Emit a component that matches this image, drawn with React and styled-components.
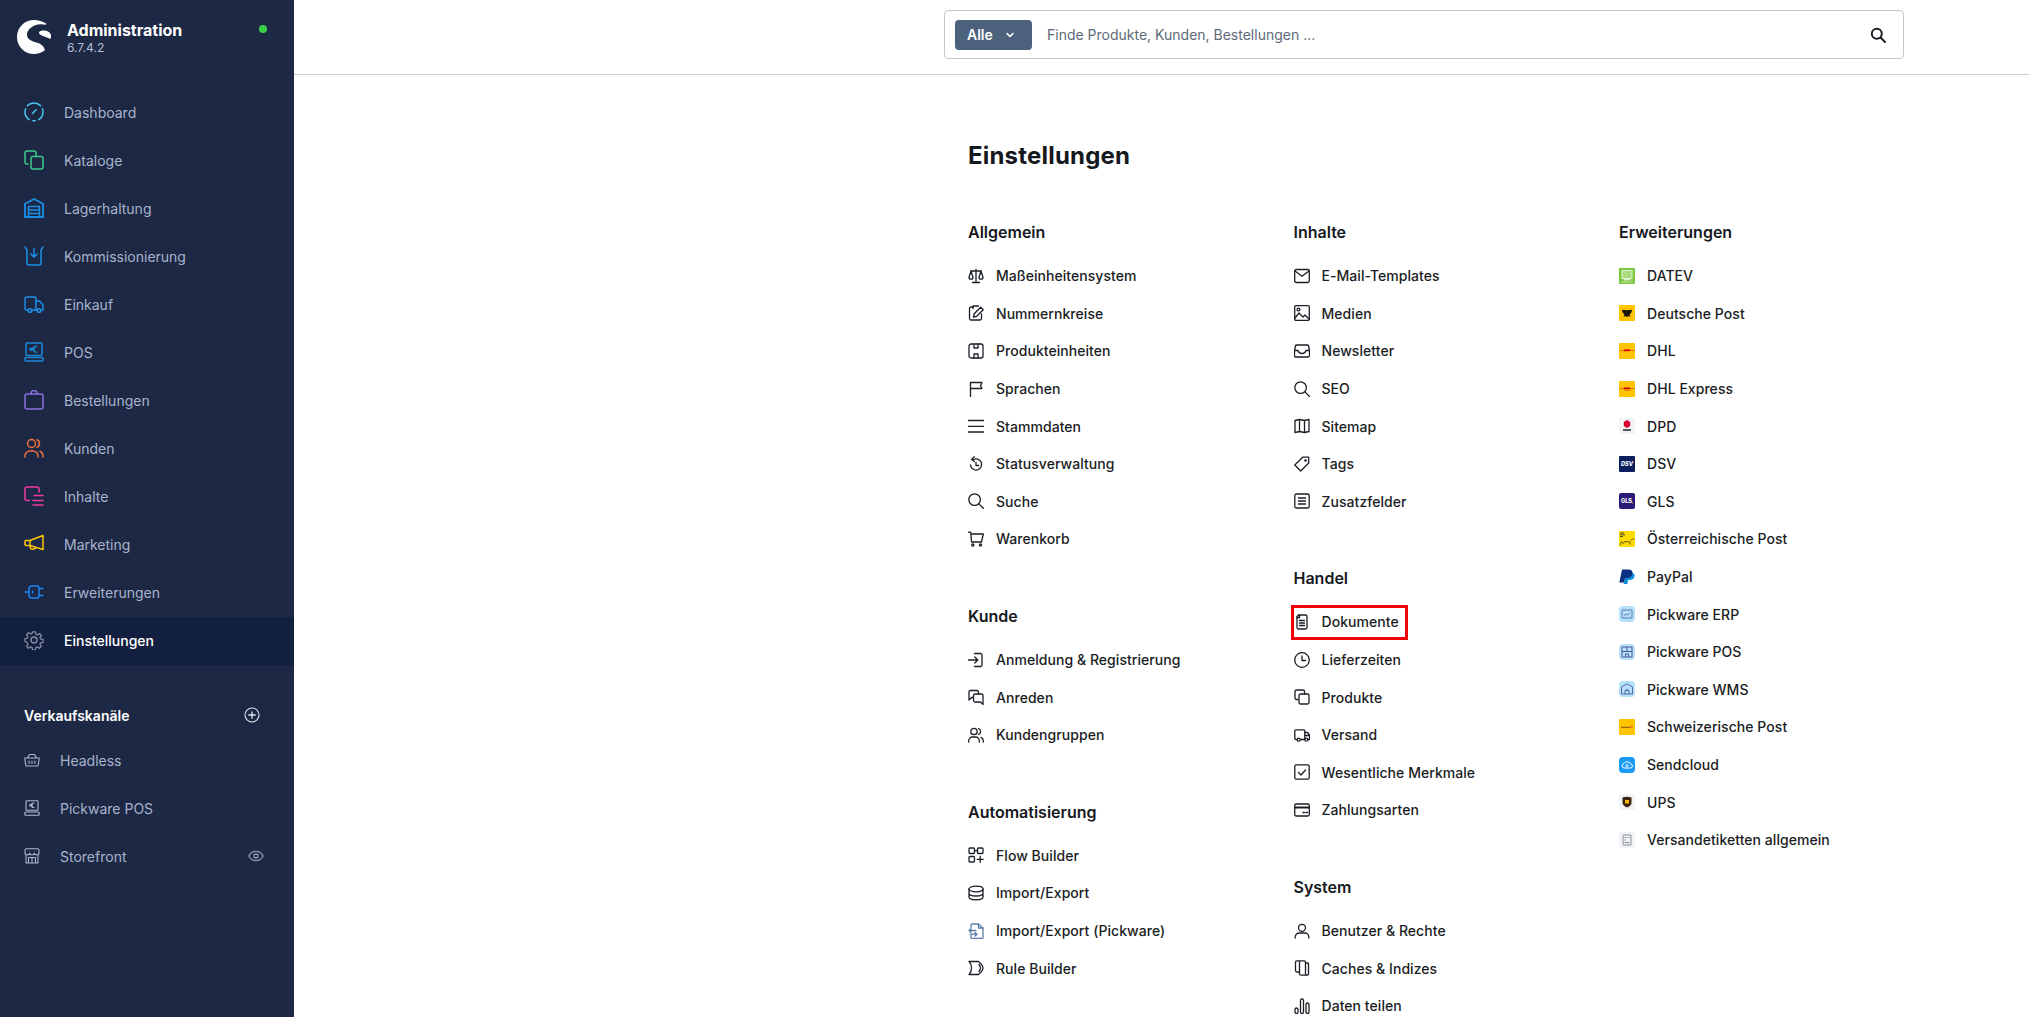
import React from "react";
import styled, { createGlobalStyle } from "styled-components";

const Global = createGlobalStyle`
  html, body { margin: 0; padding: 0; height: 100%; background: #fff; }
  body { font-family: Inter, "Noto Sans", "Liberation Sans", sans-serif; -webkit-font-smoothing: antialiased; }
  * { box-sizing: border-box; }
`;

const Page = styled.div`
  display: flex;
  width: 100%;
  height: 100vh;
  overflow: hidden;
`;

const Sidebar = styled.aside`
  flex: 0 0 294px;
  display: flex;
  flex-direction: column;
  background: #1d2845;
`;

const Brand = styled.div`
  display: flex;
  height: 89px;
  padding: 20px 27px 0 17px;
  gap: 16px;
`;

const BrandText = styled.div`
  display: flex;
  flex-direction: column;
`;

const BrandName = styled.span`
  font-size: 16px;
  line-height: 20px;
  font-weight: 700;
  color: #fff;
`;

const BrandVersion = styled.span`
  font-size: 12px;
  line-height: 16px;
  color: #b4bed2;
`;

const StatusDot = styled.span`
  width: 8px;
  height: 8px;
  margin: 5px 0 0 auto;
  border-radius: 50%;
  background: #37d046;
`;

const NavRow = styled.div`
  display: flex;
  align-items: center;
  height: 48px;
  padding: 0 0 2px 24px;
  gap: 20px;
  font-size: 14px;
  color: ${(p) => (p.$active ? "#fff" : "#a8b4cc")};
  background: ${(p) => (p.$active ? "#131f3f" : "transparent")};
  font-weight: ${(p) => (p.$active ? 500 : 400)};
`;

const NavSvg = styled.svg.attrs({ viewBox: "0 0 20 20", fill: "none" })`
  width: 20px;
  height: 20px;
  flex: none;
  stroke: ${(p) => p.$color};
  stroke-width: 1.5;
  stroke-linecap: round;
  stroke-linejoin: round;
`;

const SalesHeader = styled.div`
  display: flex;
  align-items: center;
  justify-content: space-between;
  height: 20px;
  margin-top: 40px;
  margin-bottom: 12px;
  padding: 0 34px 0 24px;
  font-size: 14px;
  font-weight: 600;
  color: #fff;
`;

const ChannelRow = styled.div`
  display: flex;
  align-items: center;
  height: 48px;
  padding: 0 30px 2px 24px;
  gap: 20px;
  font-size: 14px;
  color: #a8b4cc;
`;

const ChannelSvg = styled.svg.attrs({ viewBox: "0 0 16 16", fill: "none" })`
  width: 16px;
  height: 16px;
  flex: none;
  stroke: ${(p) => p.$color || "#aeb8cc"};
  stroke-width: 1.1;
  stroke-linecap: round;
  stroke-linejoin: round;
  margin-left: ${(p) => (p.$end ? "auto" : "0")};
`;

const Main = styled.main`
  flex: 1;
  min-width: 0;
  display: flex;
  flex-direction: column;
`;

const TopBar = styled.header`
  flex: none;
  height: 75px;
  padding: 10px 0 0 650px;
  border-bottom: 1px solid #c9cbd6;
`;

const SearchBox = styled.div`
  display: flex;
  align-items: center;
  width: 960px;
  height: 49px;
  padding: 0 17px 0 10px;
  border: 1px solid #c3c5d1;
  border-radius: 4px;
`;

const ScopeButton = styled.div`
  display: flex;
  align-items: center;
  gap: 9px;
  width: 77px;
  height: 30px;
  padding-left: 12px;
  border-radius: 4px;
  background: #4c627c;
  color: #fff;
  font-size: 14px;
  font-weight: 600;
`;

const Placeholder = styled.span`
  flex: 1;
  margin-left: 15px;
  font-size: 14px;
  color: #5e6a78;
`;

const Content = styled.div`
  flex: 1;
  padding: 65px 0 0 674px;
`;

const Title = styled.h1`
  margin: 0 0 48px;
  font-size: 24px;
  line-height: 32px;
  font-weight: 700;
  letter-spacing: 0.2px;
  color: #15181d;
`;

const Columns = styled.div`
  display: grid;
  grid-template-columns: repeat(3, 325.5px);
  width: 976.5px;
`;

const Column = styled.div`
  display: flex;
  flex-direction: column;
  gap: 46px;
`;

const Heading = styled.h2`
  margin: 0 0 13px;
  font-size: 16px;
  line-height: 24px;
  font-weight: 600;
  color: #15181d;
`;

const Item = styled.div`
  display: flex;
  align-items: center;
  height: 37.6px;
  gap: 12px;
  font-size: 14px;
  font-weight: 450;
  letter-spacing: 0.05px;
  color: #1a1d23;
  width: fit-content;
  position: relative;
  ${(p) =>
    p.$marked &&
    `&::after {
      content: "";
      position: absolute;
      inset: 2px -9px 0.5px -3px;
      border: 3px solid #f40009;
    }`}
`;

const ItemSvg = styled.svg.attrs({ viewBox: "0 0 16 16", fill: "none" })`
  width: 16px;
  height: 16px;
  flex: none;
  stroke: ${(p) => p.$color || "#1a1f26"};
  stroke-width: 1.3;
  stroke-linecap: round;
  stroke-linejoin: round;
`;

const BrandSvg = styled.svg.attrs({ viewBox: "0 0 16 16" })`
  width: 16px;
  height: 16px;
  flex: none;
  border-radius: ${(p) => p.$radius || 1}px;
  background: ${(p) => p.$bg || "transparent"};
`;

const nav = [
  ["Dashboard", "#47c2e8", <><path d="M5.2 17.6A9 9 0 0 1 1 10c0-1.2.2-2.3.6-3.3M3.4 3.8A9 9 0 0 1 16.6 3.8M18.4 6.7c.4 1 .6 2.1.6 3.3a9 9 0 0 1-4.2 7.6" /><path d="M8.8 18.8h2.4" /><path d="M8.5 11.5 12 7.8" /></>],
  ["Kataloge", "#3ecb8a", <><path d="M4 14H3a2 2 0 0 1-2-2V3a2 2 0 0 1 2-2h7a2 2 0 0 1 2 2v3" /><rect x="7" y="6.5" width="12" height="12.5" rx="2" /></>],
  ["Lagerhaltung", "#1b8fe6", <><path d="M1 19V5.8L10 1l9 4.8V19z" strokeWidth="1.8" /><path d="M4.5 19V8.5h11V19M4.5 12h11M4.5 15.5h11" /></>],
  ["Kommissionierung", "#1b8fe6", <><path d="M1 1l2 3v13a2 2 0 0 0 2 2h10a2 2 0 0 0 2-2V4l2-3" /><path d="M10 2.5V11M6.8 8l3.2 3 3.2-3" /></>],
  ["Einkauf", "#1b8fe6", <><path d="M4 16H2.5A1.5 1.5 0 0 1 1 14.5v-10A1.5 1.5 0 0 1 2.5 3h8A1.5 1.5 0 0 1 12 4.5V16H8" /><path d="M12 7h3.5l3.5 4v5h-2.5M12 16h1" /><circle cx="6" cy="16.5" r="1.8" /><circle cx="15" cy="16.5" r="1.8" /></>],
  ["POS", "#1b86d6", <><rect x="2" y="1" width="16" height="12.5" rx="1" /><rect x="1" y="15.5" width="18" height="3.5" rx="1" /><path d="M12.5 4.2a3 3 0 1 0 0 6M6 6.4h4.5M6 8h4" /></>],
  ["Bestellungen", "#8a6fe0", <><rect x="1" y="4" width="18" height="15" rx="2" /><path d="M7 4V3.5a3 3 0 0 1 6 0V4" /></>],
  ["Kunden", "#ef7140", <><circle cx="7.5" cy="5.5" r="4" /><path d="M1 19v-1a5 5 0 0 1 5-5h3a5 5 0 0 1 5 5v1" /><path d="M13 1.8a4 4 0 0 1 0 7.4M16 13.3a5 5 0 0 1 3 4.7v1" /></>],
  ["Inhalte", "#f03c9c", <><path d="M5.5 14.5H3a2 2 0 0 1-2-2V3a2 2 0 0 1 2-2h10a2 2 0 0 1 2 2v3" /><path d="M10 9.5h9M9 14.5h10M9 19h10" /></>],
  ["Marketing", "#ffc700", <><path d="M19 1.5v14L6 11.5H2a1 1 0 0 1-1-1v-3a1 1 0 0 1 1-1h4z" /><path d="M6 6.5v5M6 11.5 6.5 14a1.5 1.5 0 0 0 1.8 1.2l3-.6" /></>],
  ["Erweiterungen", "#1a86f0", <><path d="M1 10h4M15 6.5h4M15 13.5h4" /><path d="M8 4h5a2 2 0 0 1 2 2v8a2 2 0 0 1-2 2H8a3 3 0 0 1-3-3V7a3 3 0 0 1 3-3z" /><path d="M8.5 9v2" /></>],
  ["Einstellungen", "#7d899e", <><path d="M8.4 1h3.2l.5 2.6 1.7.7 2.2-1.5 2.2 2.2-1.5 2.2.7 1.7 2.6.5v3.2l-2.6.5-.7 1.7 1.5 2.2-2.2 2.2-2.2-1.5-1.7.7-.5 2.5H8.4l-.5-2.5-1.7-.7-2.2 1.5-2.2-2.2 1.5-2.2-.7-1.7L0 11.6V8.4l2.6-.5.7-1.7-1.5-2.2L4 1.8l2.2 1.5 1.7-.7z" transform="translate(1 1) scale(.9)" /><circle cx="10" cy="10" r="3" /></>, true],
];

const ic = {
  scale: <><path d="M8 1.5v12M4.5 14.5h7M2.8 3h10.4" /><path d="M3 3.2 1 9.2a2 2 0 0 0 4 0zM13 3.2l-2 6a2 2 0 0 0 4 0z" /></>,
  pen: <><path d="M5 2H3A1.5 1.5 0 0 0 1.5 3.500v10A1.5 1.5 0 0 0 3 15h9a1.5 1.5 0 0 0 1.5-1.5V9" /><path d="M5 1v2.500M5 1h5.500" /><path d="M5.500 12l.7-3.200L12.700 2.300l2.500 2.500-6.500 6.500z" /></>,
  box: <><rect x="1" y="1" width="14" height="14" rx="2" /><path d="M6 1v4h4V1M6 15v-4h4v4" /></>,
  flag: <path d="M2.500 15.500V1.500h11.500l-1.500 3.200L14 7.500H2.500" />,
  menu: <path d="M.5 2.500h15M.5 8.300h15M.5 14h15" />,
  history: <><path d="M4.800 3.900A5.600 5.600 0 1 1 2.500 9" /><path d="M6.200 .8 3.600 3.400l2.800 2.200" /><path d="M8 6.500v3h2.600" /></>,
  search: <><circle cx="6.600" cy="6.600" r="5.800" /><path d="m10.900 10.900 4.600 4.600" /></>,
  cart: <><path d="M.5 1.200h2.200l.9 9.800h9.900L15.300 3H3" /><circle cx="4.800" cy="14" r="1.100" /><circle cx="12.500" cy="14" r="1.100" /></>,
  login: <><path d="M.5 8H9.500M6.800 5l3 3-3 3" /><path d="M6.500 1.500h6a1.500 1.500 0 0 1 1.500 1.500v10a1.500 1.500 0 0 1-1.500 1.500h-6" /></>,
  chat: <><path d="M10.500 5V3a1.500 1.500 0 0 0-1.500-1.500H2.500A1.500 1.500 0 0 0 1 3v8l2.500-2.500H5" /><path d="M7 5h6.500A1.500 1.500 0 0 1 15 6.500v9l-2.500-2.500H7a1.500 1.500 0 0 1-1.500-1.500v-5A1.500 1.500 0 0 1 7 5z" /></>,
  users: <><circle cx="6" cy="4.500" r="3.200" /><path d="M.7 15v-1.200a3.800 3.800 0 0 1 3.800-3.800h3a3.800 3.800 0 0 1 3.800 3.800V15" /><path d="M10.500 1.500a3.200 3.200 0 0 1 0 6M13 10.300a3.800 3.800 0 0 1 2.300 3.500V15" /></>,
  flow: <><rect x="1" y="1" width="5.500" height="5.500" rx="1" /><rect x="9.500" y="1" width="5.500" height="5.500" rx="1" /><rect x="1" y="9.500" width="5.500" height="5.500" rx="1" /><path d="M6.500 3.700h3M12.200 9.500v6M9.200 12.300h6" /></>,
  db: <><ellipse cx="8" cy="4" rx="7" ry="2.800" /><path d="M1 4v8c0 1.500 3 2.800 7 2.800s7-1.300 7-2.800V4M1 8.200c0 1.500 3 2.800 7 2.800s7-1.300 7-2.800" /></>,
  transfer: <><path d="M3 4.500V2a1 1 0 0 1 1-1h6.500L15 5v9.500a1 1 0 0 1-1 1H4a1 1 0 0 1-1-1V12" /><path d="M10.500 1v4H15" /><path d="M1 7.500h7M3 5.700 1 7.500l2 1.800M2 11.200h7M7 9.400l2 1.800-2 1.800" /></>,
  rule: <><path d="M1 1.500h9.500C12.800 3.500 15 6 15 8s-2.200 4.500-4.500 6.500H1C2.800 12.800 3.500 10.500 3.500 8S2.800 3.200 1 1.500z" /><path d="M11 4.500c1 1.200 1.500 2.300 1.500 3.500s-.5 2.300-1.500 3.500" /></>,
  mail: <><rect x=".7" y="1.500" width="14.600" height="13" rx="1.500" /><path d="m1 3 7 5.200L15 3" /></>,
  image: <><rect x=".7" y=".7" width="14.600" height="14.600" rx="1.200" /><circle cx="4.500" cy="4.500" r="1.400" /><path d="m1 13 4-5 4 4 2-2 4 4" /></>,
  inbox: <><path d="M2.800 2h10.400a1.500 1.500 0 0 1 1.400 1l.9 4.500v5a1.500 1.500 0 0 1-1.500 1.500h-13A1.500 1.500 0 0 1 .5 12.500v-5L1.400 3a1.500 1.500 0 0 1 1.400-1z" /><path d="M.5 7.500H4c.5 2 2 3 4 3s3.500-1 4-3h3.500" /></>,
  map: <path d="M1 2.500 5.500 1.500 10.500 2.500 15 1.500V13.500L10.500 14.500 5.500 13.500 1 14.500zM5.500 1.500V13.500M10.500 2.500V14.500" />,
  tag: <><path d="M.8 9 8.700 1.200h6V7l-8 8z" /><circle cx="11.500" cy="4.500" r=".7" /></>,
  list: <><rect x=".8" y="1" width="14.400" height="14" rx="1.500" /><path d="M4.500 5h7M4.500 8h7M4.500 11h7" /></>,
  doc: <><path d="M4.500 1h7A1.500 1.500 0 0 1 13 2.500v11a1.500 1.500 0 0 1-1.500 1.500h-7A1.500 1.500 0 0 1 3 13.500V2.500z" /><path d="M5.500 1v2.500H3M5.500 6.500h5M5.500 9h5M5.500 11.500h5" /></>,
  clock: <><circle cx="8" cy="8" r="7.300" /><path d="M8 3.800V8.500H11.500" /></>,
  copy: <><path d="M4 10.500H2.500A1.500 1.500 0 0 1 1 9V2.500A1.500 1.500 0 0 1 2.500 1H9a1.500 1.500 0 0 1 1.500 1.500V5" /><rect x="5" y="5" width="10" height="10" rx="1.500" /></>,
  truck: <><path d="M3 12.500H1.800A1 1 0 0 1 .8 11.500V3.800a1 1 0 0 1 1-1h8a1 1 0 0 1 1 1v8.700H6.500" /><path d="M10.800 5.500h2.700l2 2.500v4.500H14M10.800 8.500h4.700" /><circle cx="4.700" cy="12.700" r="1.500" /><circle cx="12.300" cy="12.700" r="1.500" /></>,
  check: <><rect x=".8" y=".8" width="14.400" height="14.400" rx="1.500" /><path d="m4.500 8.500 2.500 2.500 4.500-5" /></>,
  card: <><rect x=".7" y="2" width="14.600" height="12" rx="1.500" /><path d="M.7 5.500h14.600" strokeWidth="1.800" /><path d="M9 10.500h1.500M12 10.500h1.500" /></>,
  user: <><circle cx="8" cy="4.800" r="3.500" /><path d="M1.200 15v-1a4 4 0 0 1 4-4h5.600a4 4 0 0 1 4 4v1" /></>,
  caches: <><path d="M5 .8H3A1.500 1.500 0 0 0 1.500 2.300V10.500A1.500 1.500 0 0 0 3 12h1.500" /><path d="M6 .8h4A1.500 1.500 0 0 1 11.500 2.300V13.700A1.500 1.500 0 0 0 13 15.200H7A1.500 1.500 0 0 1 5.500 13.700V1.300z" /><path d="M11.500 3h2A1 1 0 0 1 14.500 4v9.500A1.500 1.500 0 0 1 13 15.200" /></>,
  bars: <><rect x="1" y="10" width="3" height="5.500" rx="1.500" /><rect x="6.500" y=".8" width="3" height="14.700" rx="1.500" /><rect x="12" y="5" width="3" height="10.500" rx="1.500" /></>,
};

const dhlMarks = (
  <>
    <path d="M.5 7.600h15" stroke="#d40511" strokeWidth=".5" fill="none" />
    <rect x="5" y="6.400" width="6" height="1.800" fill="#d40511" />
  </>
);

const brands = {
  datev: <BrandSvg $bg="#7cc63f"><rect x="3" y="2.500" width="10" height="8" fill="#a9db7e" stroke="#eaf7dd" strokeWidth=".9" /><rect x="4.500" y="11.300" width="7" height="1" fill="#fff" /><rect x="2" y="13.700" width="12" height=".7" fill="#e4f4d5" /></BrandSvg>,
  post: <BrandSvg $bg="#ffc400"><path d="M3 4.500c1.500 1.500 3.500-.5 5 1 1.500-1.500 3.500.5 5-1 0 3-1.500 4-2.500 5l1 2.500-2-1-1.500 1-1.500-1-2 1 1-2.500C4.500 8.500 3 7.500 3 4.500z" fill="#17140a" /></BrandSvg>,
  dhl: <BrandSvg $bg="#ffc400">{dhlMarks}</BrandSvg>,
  dhlx: <BrandSvg $bg="#ffc400">{dhlMarks}<rect x="5" y="9.200" width="6" height=".8" fill="#e8742a" /></BrandSvg>,
  dpd: <BrandSvg $bg="#f2f3f6"><path d="M8 2 11.200 4V8L8 10 4.800 8V4z" fill="#dc0032" /><rect x="4" y="11" width="8" height="2" fill="#5a5a62" /></BrandSvg>,
  dsv: <BrandSvg $bg="#0b1f5e"><text x="8" y="10" fontSize="5.500" fontWeight="800" fontStyle="italic" fontFamily="Inter, sans-serif" textAnchor="middle" fill="#fff">DSV</text></BrandSvg>,
  gls: <BrandSvg $bg="#2b1a78" $radius={2}><text x="7.500" y="10.200" fontSize="5.600" fontWeight="800" fontFamily="Inter, sans-serif" textAnchor="middle" fill="#fff">GLS</text><circle cx="13.500" cy="10" r=".6" fill="#ffd100" /></BrandSvg>,
  at: <BrandSvg $bg="#ffdc00"><path d="M1 2h4M1 3.800h5M1 5.500h3" stroke="#222" strokeWidth=".8" /><path d="M1 14l1.500-3.500 2 2 1-2 5 .5 1 2.500M11 10.500l3-3 1 1" stroke="#222" strokeWidth=".7" fill="none" /></BrandSvg>,
  paypal: <BrandSvg><path d="M5 13.500 7 4h5.500c2.500 0 3.500 1.500 3 3.500-.6 2.600-2.600 3.500-5 3.500H9L8.300 15H4.500z" fill="#0a8ddb" /><path d="M3 .5h6.500c3 0 4.500 1.700 4 4.300C13 7.800 10.500 9 8 9H6L5 13.500H.3z" fill="#0b2f7e" /></BrandSvg>,
  erp: <BrandSvg $bg="#b5e2fa" $radius={4}><g fill="none" stroke="#4a5c9c" strokeWidth=".8"><rect x="3" y="4" width="10" height="8" rx=".7" /><path d="m5 9.500 2-1.500 1.500 1 2.500-2" /></g></BrandSvg>,
  pos: <BrandSvg $bg="#b5e2fa" $radius={4}><g fill="none" stroke="#3e4a8c" strokeWidth=".9"><rect x="3" y="3" width="10" height="10" /><path d="M3 7.500h10M8 3v4.500M6.500 13v-3h3v3" /></g></BrandSvg>,
  wms: <BrandSvg $bg="#b5e2fa" $radius={4}><g fill="none" stroke="#4a5c9c" strokeWidth=".9"><path d="M2.500 13V6L8 2.800 13.500 6v7z" /><path d="M6 13V9.500h4V13M8 7.500v2" /></g></BrandSvg>,
  ch: <BrandSvg $bg="#ffc400"><path d="M2 8.300h9" stroke="#6b4a10" strokeWidth=".9" /><circle cx="12.500" cy="7.800" r="1.300" fill="#e8742a" /></BrandSvg>,
  send: <BrandSvg $bg="#1a9cf5" $radius={4}><path d="M5 11h6.300a2 2 0 0 0 .3-4A3.700 3.700 0 0 0 5 6.500 2.300 2.300 0 0 0 5 11z" fill="none" stroke="#fff" strokeWidth="1" /><circle cx="8" cy="8.700" r="1.100" fill="none" stroke="#fff" strokeWidth=".8" /></BrandSvg>,
  ups: <BrandSvg $bg="#f2f3f6"><path d="M3.500 3.500C6 2.500 10 2.500 12.500 3.500V9c0 2-2.500 3.500-4.500 4.500C6 12.500 3.500 11 3.500 9z" fill="#3a2410" /><path d="M6 6h4v3.500H6z" fill="#f5b800" /></BrandSvg>,
  label: <BrandSvg $bg="#f2f3f6"><g fill="none" stroke="#6b7280" strokeWidth=".8"><rect x="4" y="3" width="8" height="10" rx=".5" /><path d="M5.500 5.500h2M9 5.500h1.500M5.500 8h1.500M5.500 10.500h5" /></g></BrandSvg>,
};

const col1 = [
  ["Allgemein", [["Maßeinheitensystem", "scale"], ["Nummernkreise", "pen"], ["Produkteinheiten", "box"], ["Sprachen", "flag"], ["Stammdaten", "menu"], ["Statusverwaltung", "history"], ["Suche", "search"], ["Warenkorb", "cart"]]],
  ["Kunde", [["Anmeldung & Registrierung", "login"], ["Anreden", "chat"], ["Kundengruppen", "users"]]],
  ["Automatisierung", [["Flow Builder", "flow"], ["Import/Export", "db"], ["Import/Export (Pickware)", "transfer", "#5d7ea6"], ["Rule Builder", "rule"]]],
];

const col2 = [
  ["Inhalte", [["E-Mail-Templates", "mail"], ["Medien", "image"], ["Newsletter", "inbox"], ["SEO", "search"], ["Sitemap", "map"], ["Tags", "tag"], ["Zusatzfelder", "list"]]],
  ["Handel", [["Dokumente", "doc", null, true], ["Lieferzeiten", "clock"], ["Produkte", "copy"], ["Versand", "truck"], ["Wesentliche Merkmale", "check"], ["Zahlungsarten", "card"]]],
  ["System", [["Benutzer & Rechte", "user"], ["Caches & Indizes", "caches"], ["Daten teilen", "bars"]]],
];

const col3 = [
  ["Erweiterungen", [
    ["DATEV", "datev"], ["Deutsche Post", "post"], ["DHL", "dhl"], ["DHL Express", "dhlx"], ["DPD", "dpd"], ["DSV", "dsv"], ["GLS", "gls"],
    ["Österreichische Post", "at"], ["PayPal", "paypal"], ["Pickware ERP", "erp"], ["Pickware POS", "pos"], ["Pickware WMS", "wms"],
    ["Schweizerische Post", "ch"], ["Sendcloud", "send"], ["UPS", "ups"], ["Versandetiketten allgemein", "label"],
  ]],
];

function Section({ title, items }) {
  return (
    <section>
      <Heading>{title}</Heading>
      {items.map(([label, icon, color, marked]) => (
        <Item key={label} $marked={marked}>
          {brands[icon] || <ItemSvg $color={color}>{ic[icon]}</ItemSvg>}
          {label}
        </Item>
      ))}
    </section>
  );
}

const LogoSvg = styled.svg.attrs({ viewBox: "0 0 34 34" })`
  width: 34px;
  height: 34px;
  flex: none;
  fill: #fff;
`;

const Logo = () => (
  <LogoSvg>
    <path d="M27.500 30.500C24.500 32.800 21 34 17 34 7.500 34 0 26.500 0 17S7.500 0 17 0c4.500 0 8.500 1.300 12 3.500.5.500.3 1.300-.5 1.200C25 3.800 21 4 17.500 5.500 12.500 7.800 9.800 11.500 10 15c.2 4 4 6 9.500 7.500 4 1.200 7.500 3.500 8.300 7.200.1.300 0 .6-.3.800z" />
    <path d="M34 15.500c.1 1.500-.2 2.800-.7 3.500-3.500-2-7.500-2.800-10.300-4.500-1.500-1-1.200-2.800.8-3.500 4-1.300 9.800.5 10.200 4.500z" />
  </LogoSvg>
);

export default function App() {
  return (
    <Page>
      <Global />
      <Sidebar>
        <Brand>
          <Logo />
          <BrandText>
            <BrandName>Administration</BrandName>
            <BrandVersion>6.7.4.2</BrandVersion>
          </BrandText>
          <StatusDot />
        </Brand>
        {nav.map(([label, color, paths, active]) => (
          <NavRow key={label} $active={active}>
            <NavSvg $color={color}>{paths}</NavSvg>
            {label}
          </NavRow>
        ))}
        <SalesHeader>
          Verkaufskanäle
          <ChannelSvg $color="#dfe4ee">
            <circle cx="8" cy="8" r="7" />
            <path d="M8 4.800v6.400M4.800 8h6.400" strokeWidth="1.300" />
          </ChannelSvg>
        </SalesHeader>
        <ChannelRow>
          <ChannelSvg>
            <path d="M.8 6h14.400l-.8 6.500a1.500 1.500 0 0 1-1.500 1.500H3.100a1.500 1.500 0 0 1-1.500-1.500zM3.500 6l2-3.500h5l2 3.500M5 9v2.500M8 9v2.500M11 9v2.500" />
          </ChannelSvg>
          Headless
        </ChannelRow>
        <ChannelRow>
          <ChannelSvg>
            <rect x="2" y=".8" width="12" height="9.500" rx=".8" />
            <rect x=".8" y="12" width="14.400" height="3.200" rx="1" />
            <path d="M10 3a2.300 2.300 0 1 0 0 4.500M5.500 4.700h3M5.500 6h3" />
          </ChannelSvg>
          Pickware POS
        </ChannelRow>
        <ChannelRow>
          <ChannelSvg>
            <path d="M2.500.8h11A1.500 1.500 0 0 1 15 2.300V5c0 1-1 1.800-2.300 1.800S10.300 6 10.300 5c0 1-1 1.800-2.300 1.800S5.700 6 5.700 5c0 1-1 1.800-2.400 1.800S1 6 1 5V2.300A1.500 1.500 0 0 1 2.500.8z" />
            <path d="M2 7v8h12V7M4.500 15V9.500h7V15M8 9.500V15" />
          </ChannelSvg>
          Storefront
          <ChannelSvg $end $color="#8f9bb3">
            <path d="M.8 8C2.500 5 5 3.300 8 3.300S13.500 5 15.200 8c-1.700 3-4.200 4.700-7.200 4.700S2.500 11 .8 8z" strokeWidth="1.300" />
            <circle cx="8" cy="8" r="2" strokeWidth="1.300" />
          </ChannelSvg>
        </ChannelRow>
      </Sidebar>
      <Main>
        <TopBar>
          <SearchBox>
            <ScopeButton>
              Alle
              <ChannelSvg $color="#fff">
                <path d="m5 6.500 3 3 3-3" strokeWidth="1.600" />
              </ChannelSvg>
            </ScopeButton>
            <Placeholder>Finde Produkte, Kunden, Bestellungen ...</Placeholder>
            <ItemSvg>
              <circle cx="6.800" cy="6.800" r="5" strokeWidth="2" />
              <path d="m10.500 10.500 4.500 4.500" strokeWidth="2" />
            </ItemSvg>
          </SearchBox>
        </TopBar>
        <Content>
          <Title>Einstellungen</Title>
          <Columns>
            {[col1, col2, col3].map((col, i) => (
              <Column key={i}>
                {col.map(([title, items]) => (
                  <Section key={title} title={title} items={items} />
                ))}
              </Column>
            ))}
          </Columns>
        </Content>
      </Main>
    </Page>
  );
}
